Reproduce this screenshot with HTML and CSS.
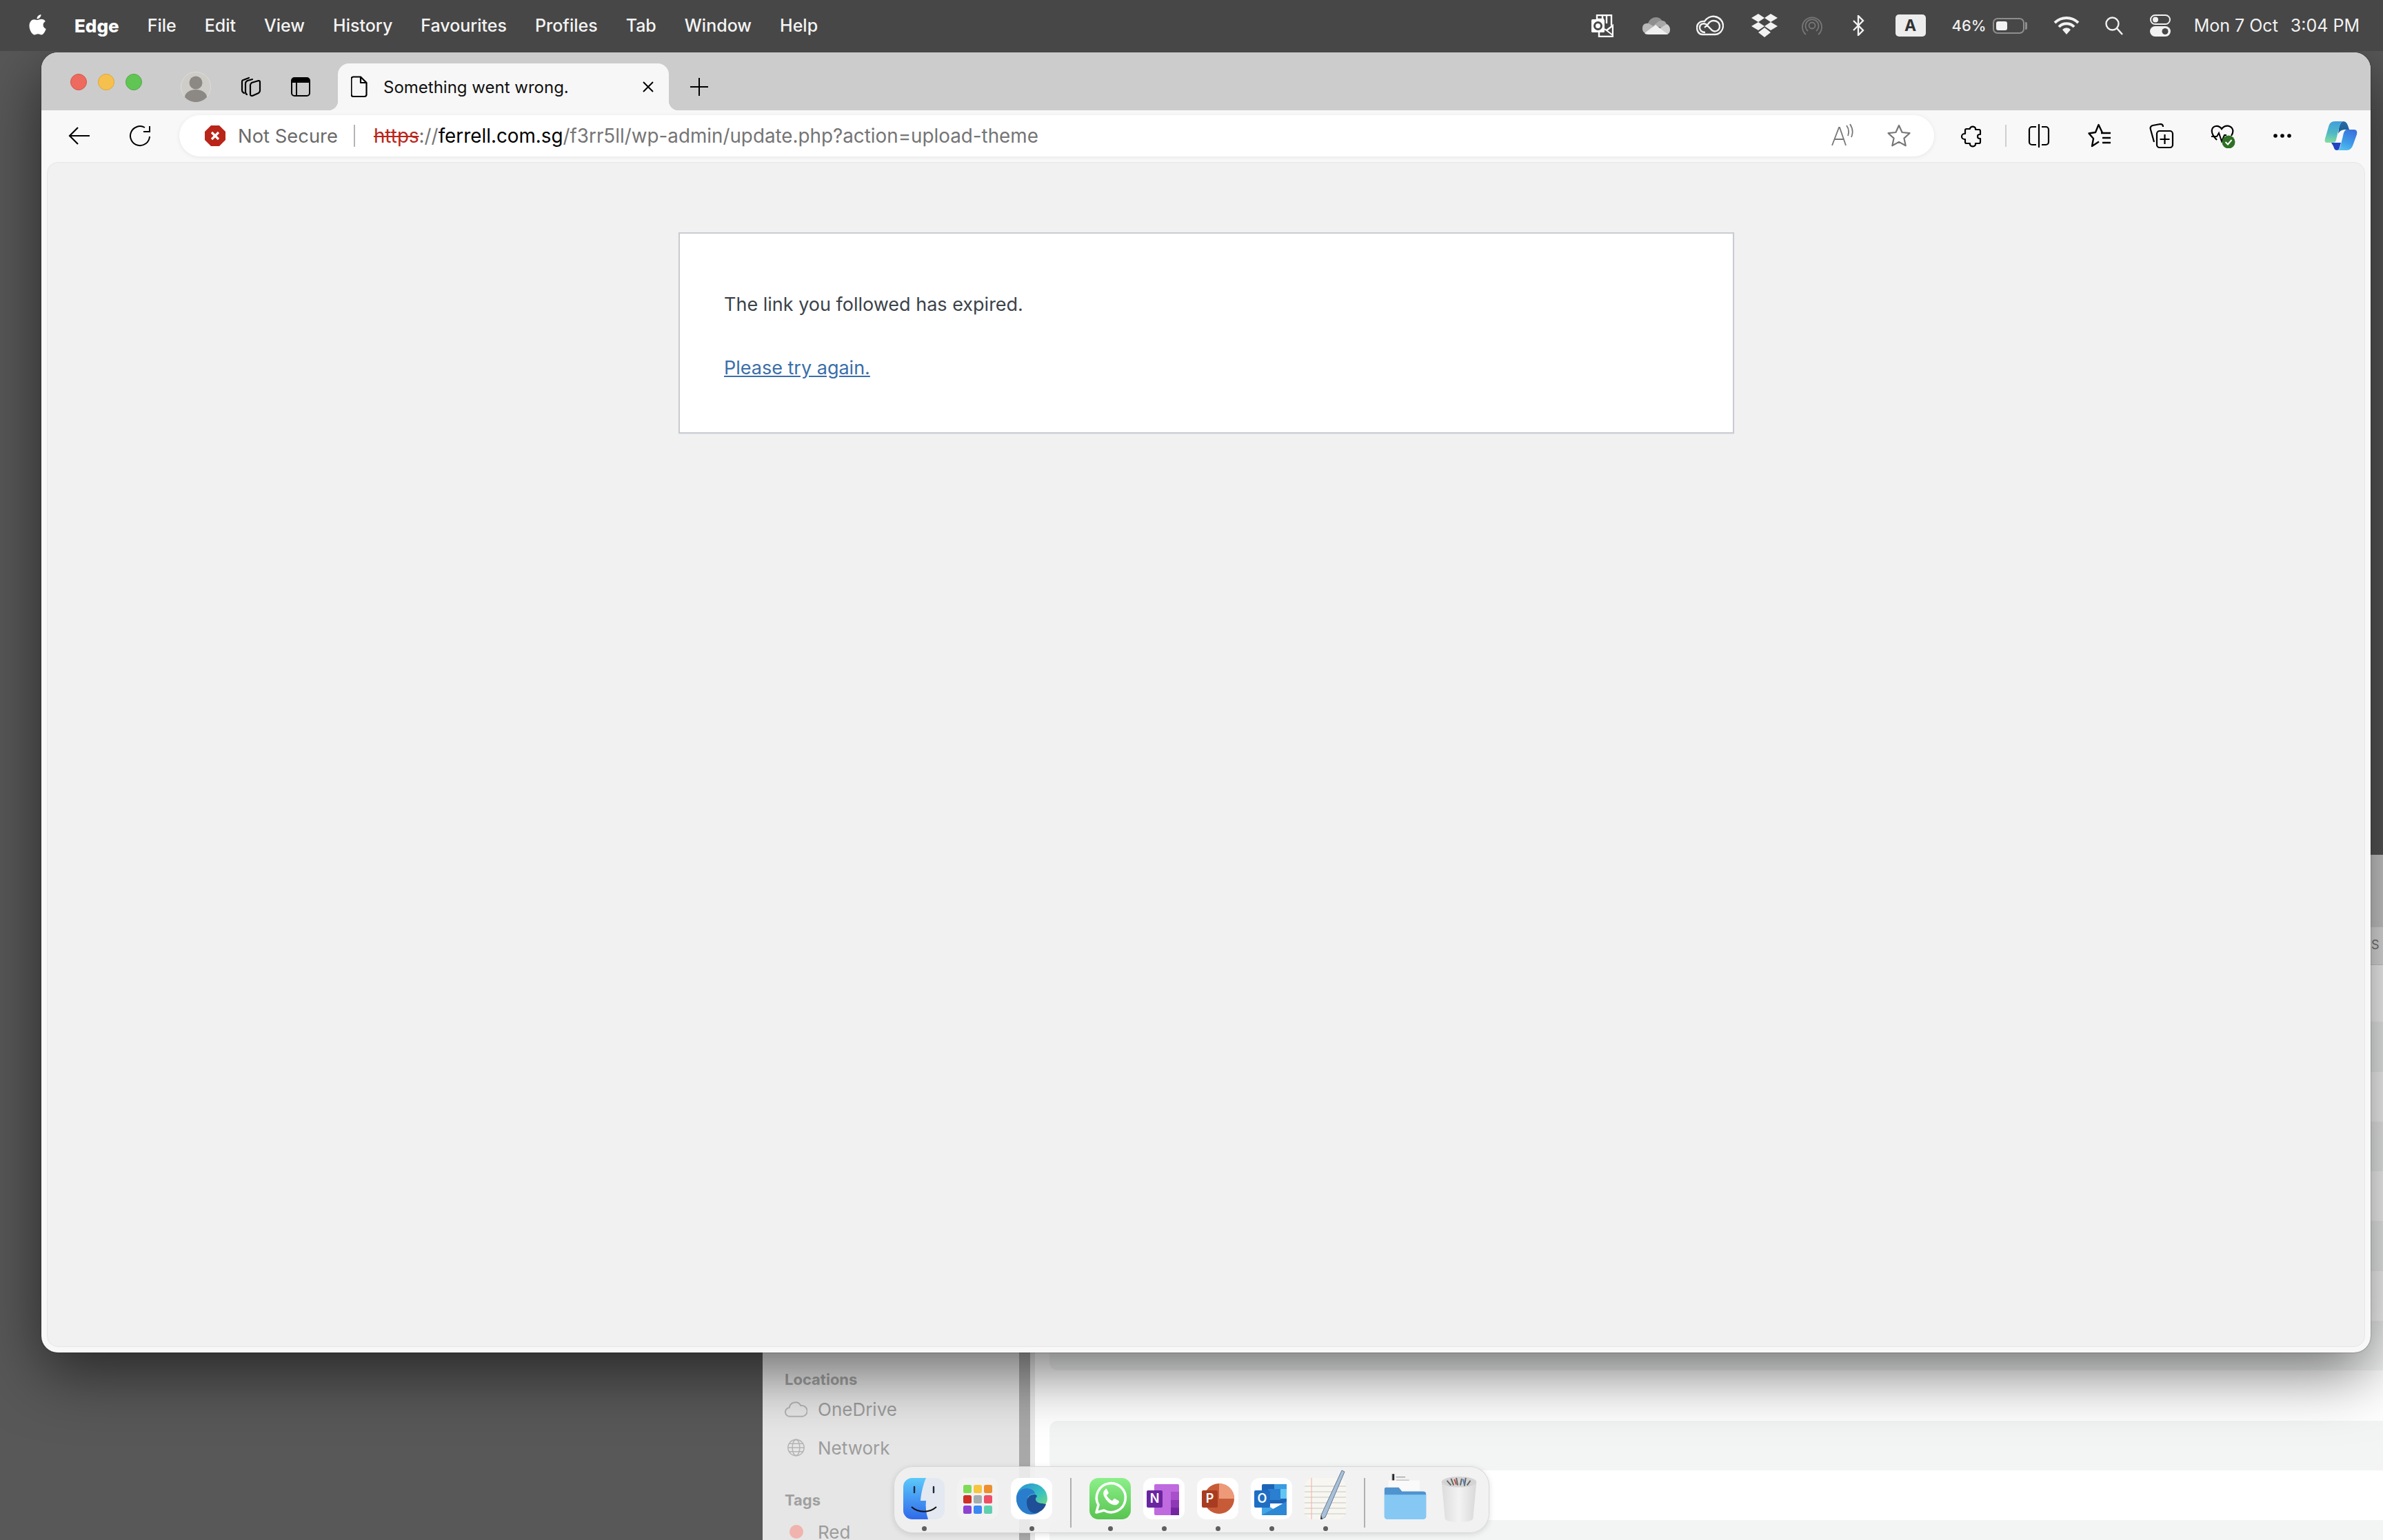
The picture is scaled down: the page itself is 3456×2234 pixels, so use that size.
FILE: index.html
```html
<html>
  <head>
    <title>Something went wrong.</title>
    <meta name="viewport" content="width=device-width, initial-scale=1">
    <link rel="stylesheet" href="styles.css">
  </head>
  <body>
    <!-- window behind the browser -->
    <div class="finder">
      <div class="sidebar">
        <div class="side-head">Locations</div>
        <div class="side-item">
          <svg class="side-icon" viewBox="0 0 34 26"><path d="M8 24a6.500 6.500 0 0 1-1-13 9 9 0 0 1 17-3 7 7 0 0 1 3 16z" fill="none" stroke="#b4b4b4" stroke-width="2"/></svg>
          OneDrive
        </div>
        <div class="side-item">
          <svg class="side-icon" viewBox="0 0 34 26"><g fill="none" stroke="#b4b4b4" stroke-width="1.600"><circle cx="17" cy="13" r="12"/><ellipse cx="17" cy="13" rx="5.500" ry="12"/><path d="M5 13h24M7 7h20M7 19h20"/></g></svg>
          Network
        </div>
        <div class="side-head tags">Tags</div>
        <div class="side-item">
          <span class="tag-dot"></span>
          Red
        </div>
      </div>
      <div class="side-rule"></div>
      <div class="file-pane">
        <div class="pane-title"></div>
        <div class="pane-head">S</div>
        <div class="pane-rows">
          <div class="file-row"></div><div class="file-row"></div><div class="file-row"></div><div class="file-row"></div>
          <div class="file-row"></div><div class="file-row"></div><div class="file-row"></div><div class="file-row"></div>
          <div class="file-row"></div><div class="file-row"></div><div class="file-row"></div><div class="file-row"></div>
        </div>
      </div>
    </div>

    <!-- browser window -->
    <div class="browser">
      <div class="tabstrip">
        <div class="lights">
          <span class="light red"></span>
          <span class="light yellow"></span>
          <span class="light green"></span>
        </div>
        <svg class="avatar" viewBox="0 0 44 44"><circle cx="22" cy="22" r="21.500" fill="#cfcdc8" stroke="#dddcd8"/><circle cx="22" cy="16" r="9.500" fill="#8c8985"/><path d="M6 37a16 11 0 0 1 32 0 21.500 21.500 0 0 1-32 0z" fill="#8c8985"/></svg>
        <svg class="strip-icon tabs-icon" viewBox="0 0 32 32"><g fill="none" stroke="#000" stroke-width="2.200" stroke-linejoin="round" stroke-linecap="round"><path d="M6 25c-2-1-3-2-3-4V9c0-2 1-3 2-3l8-3"/><path d="M10 27c-2-1-2-2-2-4V11c0-2 1-3 3-4l7-2"/><path d="M15 13c0-1 1-2 2-3l10-3c1 0 2 0 2 2v13c0 1-1 2-2 3l-9 4c-2 0-3 0-3-2z"/></g></svg>
        <svg class="strip-icon vtabs-icon" viewBox="0 0 28 28"><rect x="1" y="1" width="26" height="26" rx="4" fill="none" stroke="#000" stroke-width="2"/><path d="M1 5a4 4 0 0 1 4-4h18a4 4 0 0 1 4 4v3H1z" fill="#000"/><path d="M8 8v19" stroke="#000" stroke-width="2"/></svg>
        <div class="tab">
          <svg class="doc-icon" viewBox="0 0 24 32"><path d="M3 1.500h11l8.500 8.500v17a3 3 0 0 1-3 3h-16a3 3 0 0 1-3-3v-22.500a3 3 0 0 1 3-3zM14 1.500v8.500h8.500" fill="none" stroke="#000" stroke-width="2.200" stroke-linejoin="round"/></svg>
          <span class="tab-title">Something went wrong.</span>
          <svg class="tab-close" viewBox="0 0 18 18"><path d="M2 2l14 14M16 2L2 16" stroke="#000" stroke-width="2"/></svg>
        </div>
        <svg class="new-tab" viewBox="0 0 28 28"><path d="M14 1v26M1 14h26" stroke="#000" stroke-width="2"/></svg>
      </div>

      <div class="toolbar">
        <svg class="nav-icon back" viewBox="0 0 32 28"><path d="M31 14H2M14 2L2 14l12 12" fill="none" stroke="#000" stroke-width="2.200"/></svg>
        <svg class="nav-icon reload" viewBox="0 0 32 32"><path d="M29 17a14 14 0 1 1-7-13M29 2v8h-9" fill="none" stroke="#000" stroke-width="2"/></svg>
        <div class="address">
          <svg class="warn" viewBox="0 0 30 30"><path d="M9 0h12l9 9v12l-9 9H9l-9-9V9z" fill="#b92519"/><path d="M10 10l10 10M20 10L10 20" stroke="#fff" stroke-width="3.200"/></svg>
          <span class="not-secure">Not Secure</span>
          <span class="addr-rule"></span>
          <span class="url"><span class="scheme">https</span>://<span class="host">ferrell.com.sg</span>/f3rr5ll/wp-admin/update.php?action=upload-theme</span>
          <div class="addr-tools">
            <svg class="tool" viewBox="0 0 36 36"><g fill="none" stroke="#777" stroke-width="1.800"><path d="M3 32L13 6h1l9 26M7 23h13"/><path d="M24 3c3 4 4 9 2 15M29 1c4 6 5 12 2 19"/></g></svg>
            <svg class="tool" viewBox="0 0 36 36"><path d="M18 3l4.600 10 10.900 1.200-8.100 7.400 2.300 10.700L18 26.900 8.300 32.300l2.300-10.700-8.100-7.400L13.400 13z" fill="none" stroke="#777" stroke-width="2.200" stroke-linejoin="round"/></svg>
          </div>
        </div>
        <svg class="tool ext" viewBox="0 0 36 36"><path d="M14 7a4.500 4.500 0 0 1 8 0v2h5a2 2 0 0 1 2 2v5h-1a3 3 0 0 0 0 6h1v5a2 2 0 0 1-2 2h-5v2a4.500 4.500 0 0 1-8 0v-2H9a2 2 0 0 1-2-2v-4H6a4 4 0 0 1 0-8h1v-5a2 2 0 0 1 2-2h5z" fill="none" stroke="#000" stroke-width="2.200" stroke-linejoin="round"/></svg>
        <span class="tool-rule"></span>
        <svg class="tool split" viewBox="0 0 36 36"><path d="M14 5H8a4 4 0 0 0-4 4v18a4 4 0 0 0 4 4h6M22 5h6a4 4 0 0 1 4 4v18a4 4 0 0 1-4 4h-6M18 1v34" fill="none" stroke="#000" stroke-width="2.200"/></svg>
        <svg class="tool fav" viewBox="0 0 36 36"><path d="M21 13.500L15.500 2 11 13 1.500 14.500 8 22 6 33l10-6.500M19 14h14M21 21h12M21 28h12" fill="none" stroke="#000" stroke-width="2.400" stroke-linejoin="round"/></svg>
        <svg class="tool" viewBox="0 0 36 36"><g fill="none" stroke="#000" stroke-width="2.200" stroke-linejoin="round"><path d="M7 27L2 9c-1-3 0-5 3-6l11-2c2 0 4 1 4 4"/><rect x="11" y="11" width="23" height="24" rx="4"/><path d="M22.500 16v14M15.500 23h14"/></g></svg>
        <svg class="tool" viewBox="0 0 36 36"><path d="M9 24C2 17 1 13 2 9c1-5 9-8 14-1 5-7 14-5 16 1 1 3 0 6-2 9" fill="none" stroke="#000" stroke-width="2.200"/><path d="M1 19h8l3-5 4 12 4-9h3" fill="none" stroke="#000" stroke-width="2"/><circle cx="26" cy="27" r="9.500" fill="#2f7026"/><path d="M21.500 27l3.500 3.500 5.500-6.500" fill="none" stroke="#fff" stroke-width="2"/></svg>
        <svg class="tool dots" viewBox="0 0 36 36"><circle cx="8" cy="18" r="2.800"/><circle cx="18" cy="18" r="2.800"/><circle cx="28" cy="18" r="2.800"/></svg>
        <svg class="copilot" viewBox="0 0 48 42">
          <defs>
            <linearGradient id="cpA" x1="0.500" y1="0" x2="0.400" y2="1"><stop offset="0" stop-color="#3f9fdc"/><stop offset="0.550" stop-color="#4fb8c4"/><stop offset="1" stop-color="#84dca0"/></linearGradient>
            <linearGradient id="cpB" x1="0.700" y1="0" x2="0.300" y2="1"><stop offset="0" stop-color="#3a72dc"/><stop offset="0.600" stop-color="#3f9ce8"/><stop offset="1" stop-color="#52c0ee"/></linearGradient>
            <linearGradient id="cpC" x1="0.500" y1="0" x2="0.500" y2="1"><stop offset="0" stop-color="#2a6aa8"/><stop offset="1" stop-color="#1a5f90"/></linearGradient>
          </defs>
          <path d="M27 0C31 0 33 3 34 6L36 12H30C26 12 22 14 20 18L21 10C22 5 24 1 27 0z" fill="url(#cpC)"/>
          <path d="M15 0H27C24 1 22 5 21 10L17 27C16 30 15 31 12 31H4C1 31 0 29 1 25L6 8C7 3 10 0 15 0z" fill="url(#cpA)"/>
          <path d="M10 31H24L22 38C21 41 20 42 18 42C15 42 14 39 13 36z" fill="#2244c4"/>
          <path d="M33 12H43C47 12 48 15 47 19L42 33C40 39 37 42 32 42H18C21 42 22 40 23 37L27 21C28 15 30 12 33 12z" fill="url(#cpB)"/>
        </svg>
      </div>

      <div class="content">
        <div class="error-card">
          <p class="error-text">The link you followed has expired.</p>
          <p class="error-text"><a href="#" class="error-link">Please try again.</a></p>
        </div>
      </div>
    </div>

    <!-- menu bar -->
    <div class="menubar">
      <svg class="apple" viewBox="0 0 24 30"><path d="M17 0c.300 3-2.700 6.800-6 6.500C10.700 3.300 13.900.300 17 0zM12 8c1.500 0 3.200-1.200 5.500-1.200 2.500 0 4.600 1.200 5.800 3.200-4.800 2.800-3.900 9 1 11-1.300 3.500-3.900 8.500-6.800 8.500-1.800 0-2.600-1.200-4.900-1.200s-3.100 1.200-4.900 1.200C4 29.500 0 22.500 0 16.500 0 10.500 3.700 7.200 7.200 7.200 9 7.200 10.800 8 12 8z" fill="#fff"/></svg>
      <nav class="menus">
        <span class="menu-item app-name">Edge</span>
        <span class="menu-item">File</span>
        <span class="menu-item">Edit</span>
        <span class="menu-item">View</span>
        <span class="menu-item">History</span>
        <span class="menu-item">Favourites</span>
        <span class="menu-item">Profiles</span>
        <span class="menu-item">Tab</span>
        <span class="menu-item">Window</span>
        <span class="menu-item">Help</span>
      </nav>
      <div class="status">
        <svg class="st outlook" viewBox="0 0 32 33"><path d="M8 7V1h21v15M16 1v6M22 1v12M8 7h10" fill="none" stroke="#fff" stroke-width="2.400"/><rect x="0" y="7" width="19" height="19" rx="1.500" fill="#fff"/><circle cx="9.500" cy="16.500" r="5" fill="none" stroke="#474747" stroke-width="3"/><path d="M11 26v6h20V16l-9 7" fill="none" stroke="#fff" stroke-width="2.400"/><path d="M19 21l12 9" stroke="#fff" stroke-width="2"/></svg>
        <svg class="st onedrive" viewBox="0 0 40 26"><path d="M8 10c2-6 7-9 12-9 4 0 7 2 9 6l-10 6-7 5-6-4z" fill="#8f8f8f"/><path d="M6 10a6 6 0 0 1 3 0l7 4-10 9C2 25 0 21 0 17c0-4 2-7 6-7z" fill="#b9b9b9"/><path d="M22 8c2-2 4-2 7-2 3 0 6 3 6 6l-8 4-11-3z" fill="#a8a8a8"/><path d="M35 11c3 1 5 4 5 8 0 4-2 7-6 7H30l-8-7z" fill="#cfcfcf"/><path d="M19 12l18 14H8c-3 0-4-1-5-2z" fill="#f0f0f0"/></svg>
        <svg class="st cc" viewBox="0 0 40 30"><g fill="none" stroke="#f2f2f2" stroke-width="2.400"><path d="M9 28C3 28 1 22 1 18c0-6 5-10 11-9 3-5 9-8 15-7 7 1 12 7 12 13 0 7-5 13-12 13z"/><path d="M13 25c-5 0-8-3-8-7 0-5 5-7 9-5l9 9c4 3 11 1 11-6 0-5-4-8-9-8-3 0-6 2-8 5l-5 5"/></g></svg>
        <svg class="st dropbox" viewBox="0 0 38 34"><path d="M10 0l9 6-9 6-10-6zM28 0l10 6-10 6-9-6zM10 12l9 6-9 6-10-6zM28 12l10 6-10 6-9-6zM19 20l9 7-9 7-9-7z" fill="#f2f2f2"/></svg>
        <svg class="st airdrop" viewBox="0 0 30 30"><g fill="none" stroke="#777" stroke-width="1.800"><path d="M6 28a14 14 0 1 1 18 0"/><path d="M9 23a9.500 9.500 0 1 1 12 0"/><circle cx="15" cy="15" r="4.500"/></g></svg>
        <svg class="st bluetooth" viewBox="0 0 18 30"><path d="M2 8l14 14-7 7V1l7 7L2 22" fill="none" stroke="#f2f2f2" stroke-width="2.400"/></svg>
        <span class="input-badge">A</span>
        <span class="battery-pct">46%</span>
        <span class="battery"><span class="battery-fill"></span></span>
        <svg class="st wifi" viewBox="0 0 38 28"><path d="M2 10a24 24 0 0 1 34 0M8 16a15 15 0 0 1 22 0" fill="none" stroke="#f2f2f2" stroke-width="4"/><path d="M13 20a8 8 0 0 1 12 0l-6 7z" fill="#f2f2f2"/></svg>
        <svg class="st search" viewBox="0 0 28 28"><circle cx="11.500" cy="11.500" r="9" fill="none" stroke="#f2f2f2" stroke-width="2.400"/><path d="M18 18l8 9" stroke="#f2f2f2" stroke-width="2.600"/></svg>
        <svg class="st control" viewBox="0 0 30 32"><rect x="1" y="1" width="28" height="13" rx="6.500" fill="none" stroke="#f2f2f2" stroke-width="2"/><circle cx="8" cy="7.500" r="4" fill="#f2f2f2"/><rect x="0" y="17" width="30" height="15" rx="7.500" fill="#f2f2f2"/><circle cx="22" cy="24.500" r="4.500" fill="#474747"/></svg>
        <span class="clock"><span>Mon 7 Oct</span><span>3:04 PM</span></span>
      </div>
    </div>

    <!-- dock -->
    <div class="dock">
      <div class="dock-item">
        <svg class="dock-icon" viewBox="0 0 60 60">
          <defs>
            <linearGradient id="fnA" x1="0" y1="0" x2="0" y2="1"><stop offset="0" stop-color="#5cc9fb"/><stop offset="1" stop-color="#2f69ea"/></linearGradient>
            <clipPath id="fnC"><rect width="60" height="60" rx="13"/></clipPath>
          </defs>
          <g clip-path="url(#fnC)">
            <rect width="60" height="60" fill="#e3e8f1"/>
            <path d="M0 0h33c-4 9-7 21-8 33h8c-1 9 0 18 3 27H0z" fill="url(#fnA)"/>
            <path d="M16 13v8M44 13v8" stroke="#1d2a3a" stroke-width="2.400" stroke-linecap="round"/>
            <path d="M12 42c10 9 26 9 36 0" fill="none" stroke="#111" stroke-width="2"/>
          </g>
        </svg>
        <span class="dock-dot"></span>
      </div>
      <div class="dock-item">
        <svg class="dock-icon" viewBox="0 0 60 60">
          <rect width="60" height="60" rx="13" fill="#f2f2f2"/>
          <rect x="9" y="10" width="12" height="12" rx="2.500" fill="#7edb58"/><rect x="24" y="10" width="12" height="12" rx="2.500" fill="#f7c63e"/><rect x="39" y="10" width="12" height="12" rx="2.500" fill="#ee8f2e"/>
          <rect x="9" y="25" width="12" height="12" rx="2.500" fill="#cf2f26"/><rect x="24" y="25" width="12" height="12" rx="2.500" fill="#a5acb0"/><rect x="39" y="25" width="12" height="12" rx="2.500" fill="#ee4f66"/>
          <rect x="9" y="40" width="12" height="12" rx="2.500" fill="#8d42d2"/><rect x="24" y="40" width="12" height="12" rx="2.500" fill="#3b88f4"/><rect x="39" y="40" width="12" height="12" rx="2.500" fill="#5fd0ae"/>
        </svg>
      </div>
      <div class="dock-item">
        <svg class="dock-icon" viewBox="0 0 60 60">
          <defs>
            <linearGradient id="edA" x1="0" y1="0" x2="1" y2="1"><stop offset="0" stop-color="#2a8fd6"/><stop offset="0.600" stop-color="#39c2c0"/><stop offset="1" stop-color="#7ddc78"/></linearGradient>
          </defs>
          <rect width="60" height="60" rx="13" fill="#fff"/>
          <path d="M8 30C8 17 18 8 30 8c12 0 23 9 23 22 0 8-6 13-13 12-5 0-7-3-6-6 1-4-3-9-9-9-9 0-14 8-14 14-2-3-3-7-3-11z" fill="url(#edA)"/>
          <path d="M8 30c0-9 7-15 15-15 7 0 12 4 12 8-6-1-11 3-11 10 0 9 7 18 18 16-4 3-8 4-13 4C17 53 8 42 8 30z" fill="#2a7dcc"/>
          <path d="M23 35c0-7 5-11 11-11 3 0 5 2 3 4-3 3 0 9 9 9l5 1c-2 7-9 13-18 13-7-2-10-9-10-16z" fill="#1f4f96"/>
        </svg>
        <span class="dock-dot"></span>
      </div>
      <span class="dock-sep"></span>
      <div class="dock-item">
        <svg class="dock-icon" viewBox="0 0 60 60">
          <defs><linearGradient id="waA" x1="0" y1="0" x2="0" y2="1"><stop offset="0" stop-color="#8cf08a"/><stop offset="1" stop-color="#58c450"/></linearGradient></defs>
          <rect width="60" height="60" rx="13" fill="url(#waA)"/>
          <path d="M10 50l3-11a21 21 0 1 1 8 8z" fill="none" stroke="#fff" stroke-width="3.600" stroke-linejoin="round"/>
          <path d="M23 17c-3 2-4 6-1 11 3 6 8 10 13 11 4 1 7-1 8-4 0-1 0-2-1-2l-5-3c-1 0-2 0-2 1l-2 2c-3-1-7-5-8-8l2-2c1-1 1-2 0-3l-2-4c-1-1-2 0-2 1z" fill="#fff"/>
        </svg>
        <span class="dock-dot"></span>
      </div>
      <div class="dock-item">
        <svg class="dock-icon" viewBox="0 0 60 60">
          <rect width="60" height="60" rx="13" fill="#fff"/>
          <rect x="16" y="9" width="36" height="45" rx="2" fill="#c06ae0"/>
          <rect x="40" y="20" width="12" height="12" fill="#a84fcc"/><rect x="40" y="32" width="12" height="11" fill="#8f38b5"/><rect x="40" y="43" width="12" height="11" fill="#7326a0"/>
          <rect x="5" y="18" width="23" height="25" rx="2" fill="#6a25a0"/>
          <text x="16.500" y="36" class="app-letter">N</text>
        </svg>
        <span class="dock-dot"></span>
      </div>
      <div class="dock-item">
        <svg class="dock-icon" viewBox="0 0 60 60">
          <rect width="60" height="60" rx="13" fill="#fff"/>
          <circle cx="32" cy="30" r="22" fill="#c75b38"/>
          <path d="M32 8a22 22 0 0 1 22 22H32z" fill="#ee9a78"/>
          <rect x="7" y="18" width="23" height="25" rx="2" fill="#a93c20"/>
          <text x="18.500" y="36" class="app-letter">P</text>
        </svg>
        <span class="dock-dot"></span>
      </div>
      <div class="dock-item">
        <svg class="dock-icon" viewBox="0 0 60 60">
          <rect width="60" height="60" rx="13" fill="#fff"/>
          <rect x="16" y="9" width="36" height="28" rx="2" fill="#1c64b8"/>
          <rect x="34" y="9" width="18" height="14" fill="#3a9be0"/><rect x="43" y="16" width="9" height="14" fill="#63c6f2"/>
          <rect x="25" y="16" width="18" height="16" fill="#2b7fd0"/>
          <path d="M16 34l18 12 18-12v20H16z" fill="#43a4e4"/>
          <path d="M16 54l36-20v20z" fill="#2c88d4"/>
          <rect x="5" y="18" width="23" height="25" rx="2" fill="#1f6ec4"/>
          <text x="16.500" y="36" class="app-letter">O</text>
        </svg>
        <span class="dock-dot"></span>
      </div>
      <div class="dock-item">
        <svg class="dock-icon notes" viewBox="0 0 60 72">
          <rect y="12" width="60" height="60" rx="13" fill="#f8f6f0"/>
          <path d="M0 24h60M0 32h60M0 40h60M0 48h60M0 56h60M0 64h60" stroke="#d8d6d0" stroke-width="1.400"/>
          <path d="M10 12v60" stroke="#efb0a8" stroke-width="1"/>
          <path d="M24 66L54 1l4 2-28 66-6 3z" fill="#a9c0d8" stroke="#607a94" stroke-width="1"/>
          <path d="M24 66l2 6 -3 0z" fill="#333"/>
        </svg>
        <span class="dock-dot"></span>
      </div>
      <span class="dock-sep"></span>
      <div class="dock-item folder-item">
        <svg class="dock-icon folder" viewBox="0 0 64 70">
          <rect x="12" y="0" width="34" height="26" fill="#f2f2f2"/>
          <path d="M12 0h3v20h-3zM18 5h14M18 10h20" stroke="#888" stroke-width="1.200"/>
          <rect x="6" y="10" width="48" height="16" fill="#fafafa"/>
          <path d="M2 21h20l5 6h32c3 0 5 1 5 4v35c0 2-2 3-4 3H4c-2 0-4-1-4-3V24c0-2 1-3 2-3z" fill="#4f93cf"/>
          <path d="M0 32h64v34c0 2-2 4-4 4H4c-2 0-4-2-4-4z" fill="#86c8f4"/>
        </svg>
      </div>
      <div class="dock-item trash-item">
        <svg class="dock-icon trash" viewBox="0 0 56 70">
          <defs><linearGradient id="trA" x1="0" y1="0" x2="1" y2="0"><stop offset="0" stop-color="#dcdcdc"/><stop offset="0.500" stop-color="#f3f3f3"/><stop offset="1" stop-color="#d8d8d8"/></linearGradient></defs>
          <path d="M2 10h52l-5 54c0 4-8 6-21 6S7 68 7 64z" fill="url(#trA)"/>
          <ellipse cx="28" cy="10" rx="26" ry="8" fill="#d4d4d4"/>
          <path d="M10 8l6 7M16 5l4 10M24 4l2 11M32 5l-2 10M38 4l-2 12M45 8l-5 7" stroke="#666" stroke-width="2"/>
          <path d="M21 6l3 8" stroke="#c2504a" stroke-width="2"/><path d="M34 6l2 8" stroke="#4a86c2" stroke-width="2"/>
        </svg>
      </div>
    </div>
  </body>
</html>
```

FILE: styles.css
```css
* { box-sizing: border-box; }

html, body {
  margin: 0;
  height: 100%;
}

body {
  position: relative;
  width: 3456px;
  height: 2234px;
  overflow: hidden;
  background: #585858;
  font-family: Inter, "Liberation Sans", sans-serif;
}

/* menu bar */
.menubar {
  position: absolute;
  left: 0;
  top: 0;
  width: 100%;
  height: 74px;
  display: flex;
  align-items: center;
  background: #474747;
  color: #fff;
  font-size: 25px;
}

.apple {
  width: 25px;
  height: 30px;
  margin-left: 42px;
  margin-top: -2px;
}

.menus {
  display: flex;
  gap: 41px;
  margin-left: 41px;
  font-weight: 500;
  color: #f4f4f4;
}

.app-name { font-weight: 800; color: #fff; font-size: 26px; }

.status {
  display: flex;
  align-items: center;
  margin-left: auto;
  padding-right: 34px;
}

.st { flex: none; }
.outlook { width: 32px; height: 33px; }
.onedrive { width: 40px; height: 26px; margin-left: 42px; }
.cc { width: 40px; height: 30px; margin-left: 38px; }
.dropbox { width: 38px; height: 34px; margin-left: 40px; }
.airdrop { width: 30px; height: 30px; margin-left: 35px; }
.bluetooth { width: 18px; height: 30px; margin-left: 43px; }
.input-badge {
  width: 44px;
  height: 32px;
  margin-left: 45px;
  border-radius: 5px;
  background: #ededed;
  color: #333;
  font-size: 23px;
  font-weight: 700;
  line-height: 32px;
  text-align: center;
}
.battery-pct { margin-left: 38px; font-size: 22px; font-weight: 500; color: #f0f0f0; }
.battery {
  position: relative;
  width: 46px;
  height: 23px;
  margin-left: 9px;
  margin-right: 4px;
  padding: 3px;
  border: 2px solid #8e8e8e;
  border-radius: 7px;
  display: flex;
}
.battery:after {
  content: '';
  position: absolute;
  right: -6px;
  top: 4px;
  width: 3px;
  height: 11px;
  border-radius: 0 2px 2px 0;
  background: #8e8e8e;
}
.battery-fill { width: 46%; background: #f2f2f2; border-radius: 3px; }
.wifi { width: 38px; height: 28px; margin-left: 38px; }
.search { width: 28px; height: 28px; margin-left: 36px; }
.control { width: 30px; height: 32px; margin-left: 38px; }
.clock {
  display: flex;
  gap: 18px;
  margin-left: 34px;
  font-size: 25px;
  font-weight: 400;
  color: #f2f2f2;
}

/* browser */
.browser {
  position: absolute;
  left: 60px;
  top: 76px;
  width: 3378px;
  height: 1886px;
  display: flex;
  flex-direction: column;
  overflow: hidden;
  border-radius: 24px;
  background: #f8f8f8;
  box-shadow: 0 28px 90px rgba(0, 0, 0, 0.55), 0 0 2px rgba(0, 0, 0, 0.5);
}

.tabstrip {
  flex: none;
  height: 84px;
  display: flex;
  align-items: center;
  background: #cccccc;
  padding: 16px 0 0 42px;
}

.lights {
  display: flex;
  gap: 16px;
  align-self: flex-start;
  margin-top: 15px;
}

.light {
  width: 24px;
  height: 24px;
  border-radius: 50%;
}
.light.red { background: #ee6a5e; border: 1px solid #d5554a; }
.light.yellow { background: #f6c04e; border: 1px solid #dfa63a; }
.light.green { background: #61c554; border: 1px solid #50ab45; }

.avatar { width: 44px; height: 44px; margin-left: 56px; }
.strip-icon { flex: none; }
.tabs-icon { width: 32px; height: 32px; margin-left: 42px; }
.vtabs-icon { width: 28px; height: 28px; margin-left: 42px; }

.tab {
  position: relative;
  width: 480px;
  height: 68px;
  margin-left: 40px;
  padding-left: 19px;
  display: flex;
  align-items: center;
  background: #f7f7f7;
  border-radius: 16px 16px 0 0;
}
.tab:before, .tab:after {
  content: '';
  position: absolute;
  bottom: 0;
  width: 14px;
  height: 14px;
}
.tab:before {
  left: -14px;
  background: radial-gradient(circle at 0 0, transparent 14px, #f7f7f7 14.500px);
}
.tab:after {
  right: -14px;
  background: radial-gradient(circle at 100% 0, transparent 14px, #f7f7f7 14.500px);
}

.doc-icon { width: 24px; height: 32px; }
.tab-title { margin-left: 23px; font-size: 24px; color: #111; }
.tab-close { width: 18px; height: 18px; margin-left: auto; margin-right: 21px; }
.new-tab { width: 28px; height: 28px; margin-left: 30px; }

.toolbar {
  flex: none;
  height: 74px;
  display: flex;
  align-items: center;
  padding-left: 39px;
}

.nav-icon { flex: none; width: 32px; height: 32px; }
.reload { margin-left: 57px; }

.address {
  flex: none;
  width: 2545px;
  height: 60px;
  margin-left: 40px;
  padding-left: 37px;
  padding-right: 33px;
  display: flex;
  align-items: center;
  background: #fff;
  border-radius: 30px;
  box-shadow: 0 1px 6px rgba(0, 0, 0, 0.08);
}

.warn { width: 30px; height: 30px; flex: none; }
.not-secure { margin-left: 18px; font-size: 27.400px; color: #6a6a6a; }
.addr-rule { width: 2px; height: 32px; margin-left: 23px; background: #b5b5b5; }
.url { margin-left: 27px; font-size: 27.800px; color: #757575; white-space: nowrap; }
.scheme { color: #b92519; text-decoration: line-through; }
.host { color: #000; }
.addr-tools { display: flex; gap: 46px; margin-left: auto; }

.tool { flex: none; width: 36px; height: 36px; margin-left: 53px; }
.addr-tools .tool { margin-left: 0; }
.ext { margin-left: 38px; }
.tool-rule { width: 2px; height: 32px; margin-left: 29px; background: #cfcfcf; }
.split { margin-left: 29px; }
.dots { margin-left: 50px; }
.copilot { flex: none; width: 48px; height: 42px; margin-left: 43px; }

.content {
  flex: 1;
  margin: 1px 8px 8px 8px;
  padding-top: 101px;
  background: #f1f1f1;
  border: 1px solid #e6e6e6;
  border-radius: 16px;
}

.error-card {
  width: 1531px;
  height: 292px;
  margin-left: 915px;
  padding: 77px 64px 0;
  background: #fff;
  border: 2px solid #c8ccd1;
  box-shadow: 0 1px 2px rgba(0, 0, 0, 0.04);
}

.error-text {
  margin: 0 0 40px;
  font-size: 27px;
  line-height: 52px;
  color: #3c434a;
}

.error-link { color: #3a6eaa; }

/* window behind */
.finder {
  position: absolute;
  left: 1106px;
  top: 1240px;
  width: 2400px;
  height: 994px;
  display: flex;
  background: #fff;
}

.sidebar {
  flex: none;
  width: 372px;
  padding: 749px 0 0 32px;
  background: #e6e6e6;
  color: #9c9c9c;
}

.side-head {
  height: 24px;
  font-size: 22px;
  font-weight: 700;
  line-height: 24px;
  color: #a0a0a0;
}
.side-head.tags { margin-top: 36px; }

.side-item {
  height: 56px;
  display: flex;
  align-items: center;
  gap: 15px;
  font-size: 26px;
}
.side-head + .side-item { margin-top: 3px; }
.tags + .side-item { margin-top: 6px; }

.side-icon { width: 33px; height: 26px; }
.tag-dot {
  width: 20px;
  height: 20px;
  margin: 0 6px 0 7px;
  border-radius: 50%;
  background: #f0b3ae;
}

.side-rule {
  flex: none;
  width: 23px;
  background: linear-gradient(to right, #a8a8a8 16px, #e9e9e9 16px);
}

.file-pane { flex: 1; }
.pane-title { height: 105px; background: #cfcfcf; }
.pane-head {
  height: 55px;
  padding-left: 1938px;
  background: #e6e6e6;
  border-bottom: 1px solid #d0d0d0;
  color: #777;
  font-size: 18px;
  line-height: 52px;
}
.pane-rows { padding-top: 10px; }

.file-row {
  height: 72.300px;
  margin-left: 21px;
  border-radius: 12px;
}
.file-row:nth-child(even) { background: #f3f5f4; }

/* dock */
.dock {
  position: absolute;
  left: 1296px;
  top: 2127px;
  width: 864px;
  height: 97px;
  display: flex;
  gap: 18px;
  padding: 16px 0 0 13px;
  background: rgba(240, 240, 240, 0.88);
  border: 1px solid rgba(200, 200, 200, 0.6);
  border-radius: 28px;
  box-shadow: 0 2px 8px rgba(0, 0, 0, 0.12);
}

.dock-item {
  position: relative;
  flex: none;
  width: 60px;
  display: flex;
  flex-direction: column;
  align-items: center;
}

.dock-icon { flex: none; width: 60px; height: 60px; }
.dock-icon.notes { height: 72px; margin-top: -12px; }
.folder-item { width: 64px; }
.dock-icon.folder { width: 64px; height: 66px; margin-top: -6px; }
.trash-item { width: 56px; }
.dock-icon.trash { width: 56px; height: 68px; margin-top: -4px; }

.dock-dot {
  position: absolute;
  top: 70px;
  width: 7px;
  height: 7px;
  border-radius: 50%;
  background: #5f5f5f;
}

.dock-sep {
  flex: none;
  width: 2px;
  height: 72px;
  margin: 0 8px;
  background: #b0b0b0;
}

.app-letter {
  font-family: Inter, "Liberation Sans", sans-serif;
  font-size: 18px;
  font-weight: 600;
  fill: #fff;
  text-anchor: middle;
}
```
